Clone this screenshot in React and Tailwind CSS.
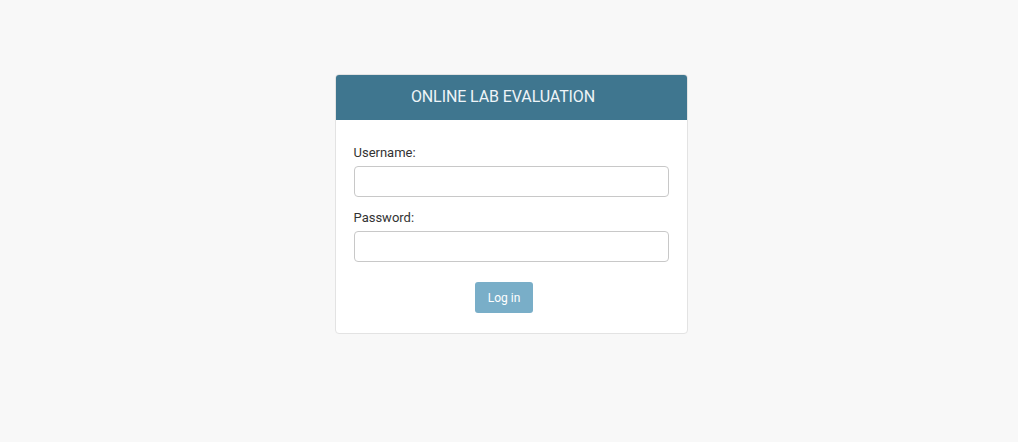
import React from 'react';

const Field = ({ label, type = 'text', className = '' }) => (
  <div className={className}>
    <label className="block text-[13px] leading-[18px] text-[#333] mb-1">{label}</label>
    <input
      type={type}
      className="block w-full h-[31px] rounded-[4px] border border-[#c8c8c8] bg-white px-2 text-[13px] outline-none"
    />
  </div>
);

export default function App() {
  return (
    <div
      className="min-h-[442px] w-full bg-[#f8f8f8] flex justify-center pt-[74px] pl-[4px]"
      style={{ fontFamily: 'Roboto, "Liberation Sans", sans-serif' }}
    >
      <div className="w-[353px] h-fit rounded-[4px] border border-[#e3e3e3] bg-white overflow-hidden">
        <div className="h-[46px] -mx-px -mt-px pr-[16px] bg-[#3f768f] flex items-center justify-center rounded-t-[4px]">
          <h1 className="text-[16px] text-[#eef4f8] tracking-[-0.1px]">ONLINE LAB EVALUATION</h1>
        </div>
        <form className="px-[18px] pt-[24px] pb-[20px]">
          <Field label="Username:" />
          <Field label="Password:" type="password" className="mt-3" />
          <div className="flex justify-center mt-5 pr-[14px]">
            <button
              type="button"
              className="h-[31px] px-[13px] rounded-[3px] bg-[#79aec8] text-white text-[12px]"
            >
              Log in
            </button>
          </div>
        </form>
      </div>
    </div>
  );
}
